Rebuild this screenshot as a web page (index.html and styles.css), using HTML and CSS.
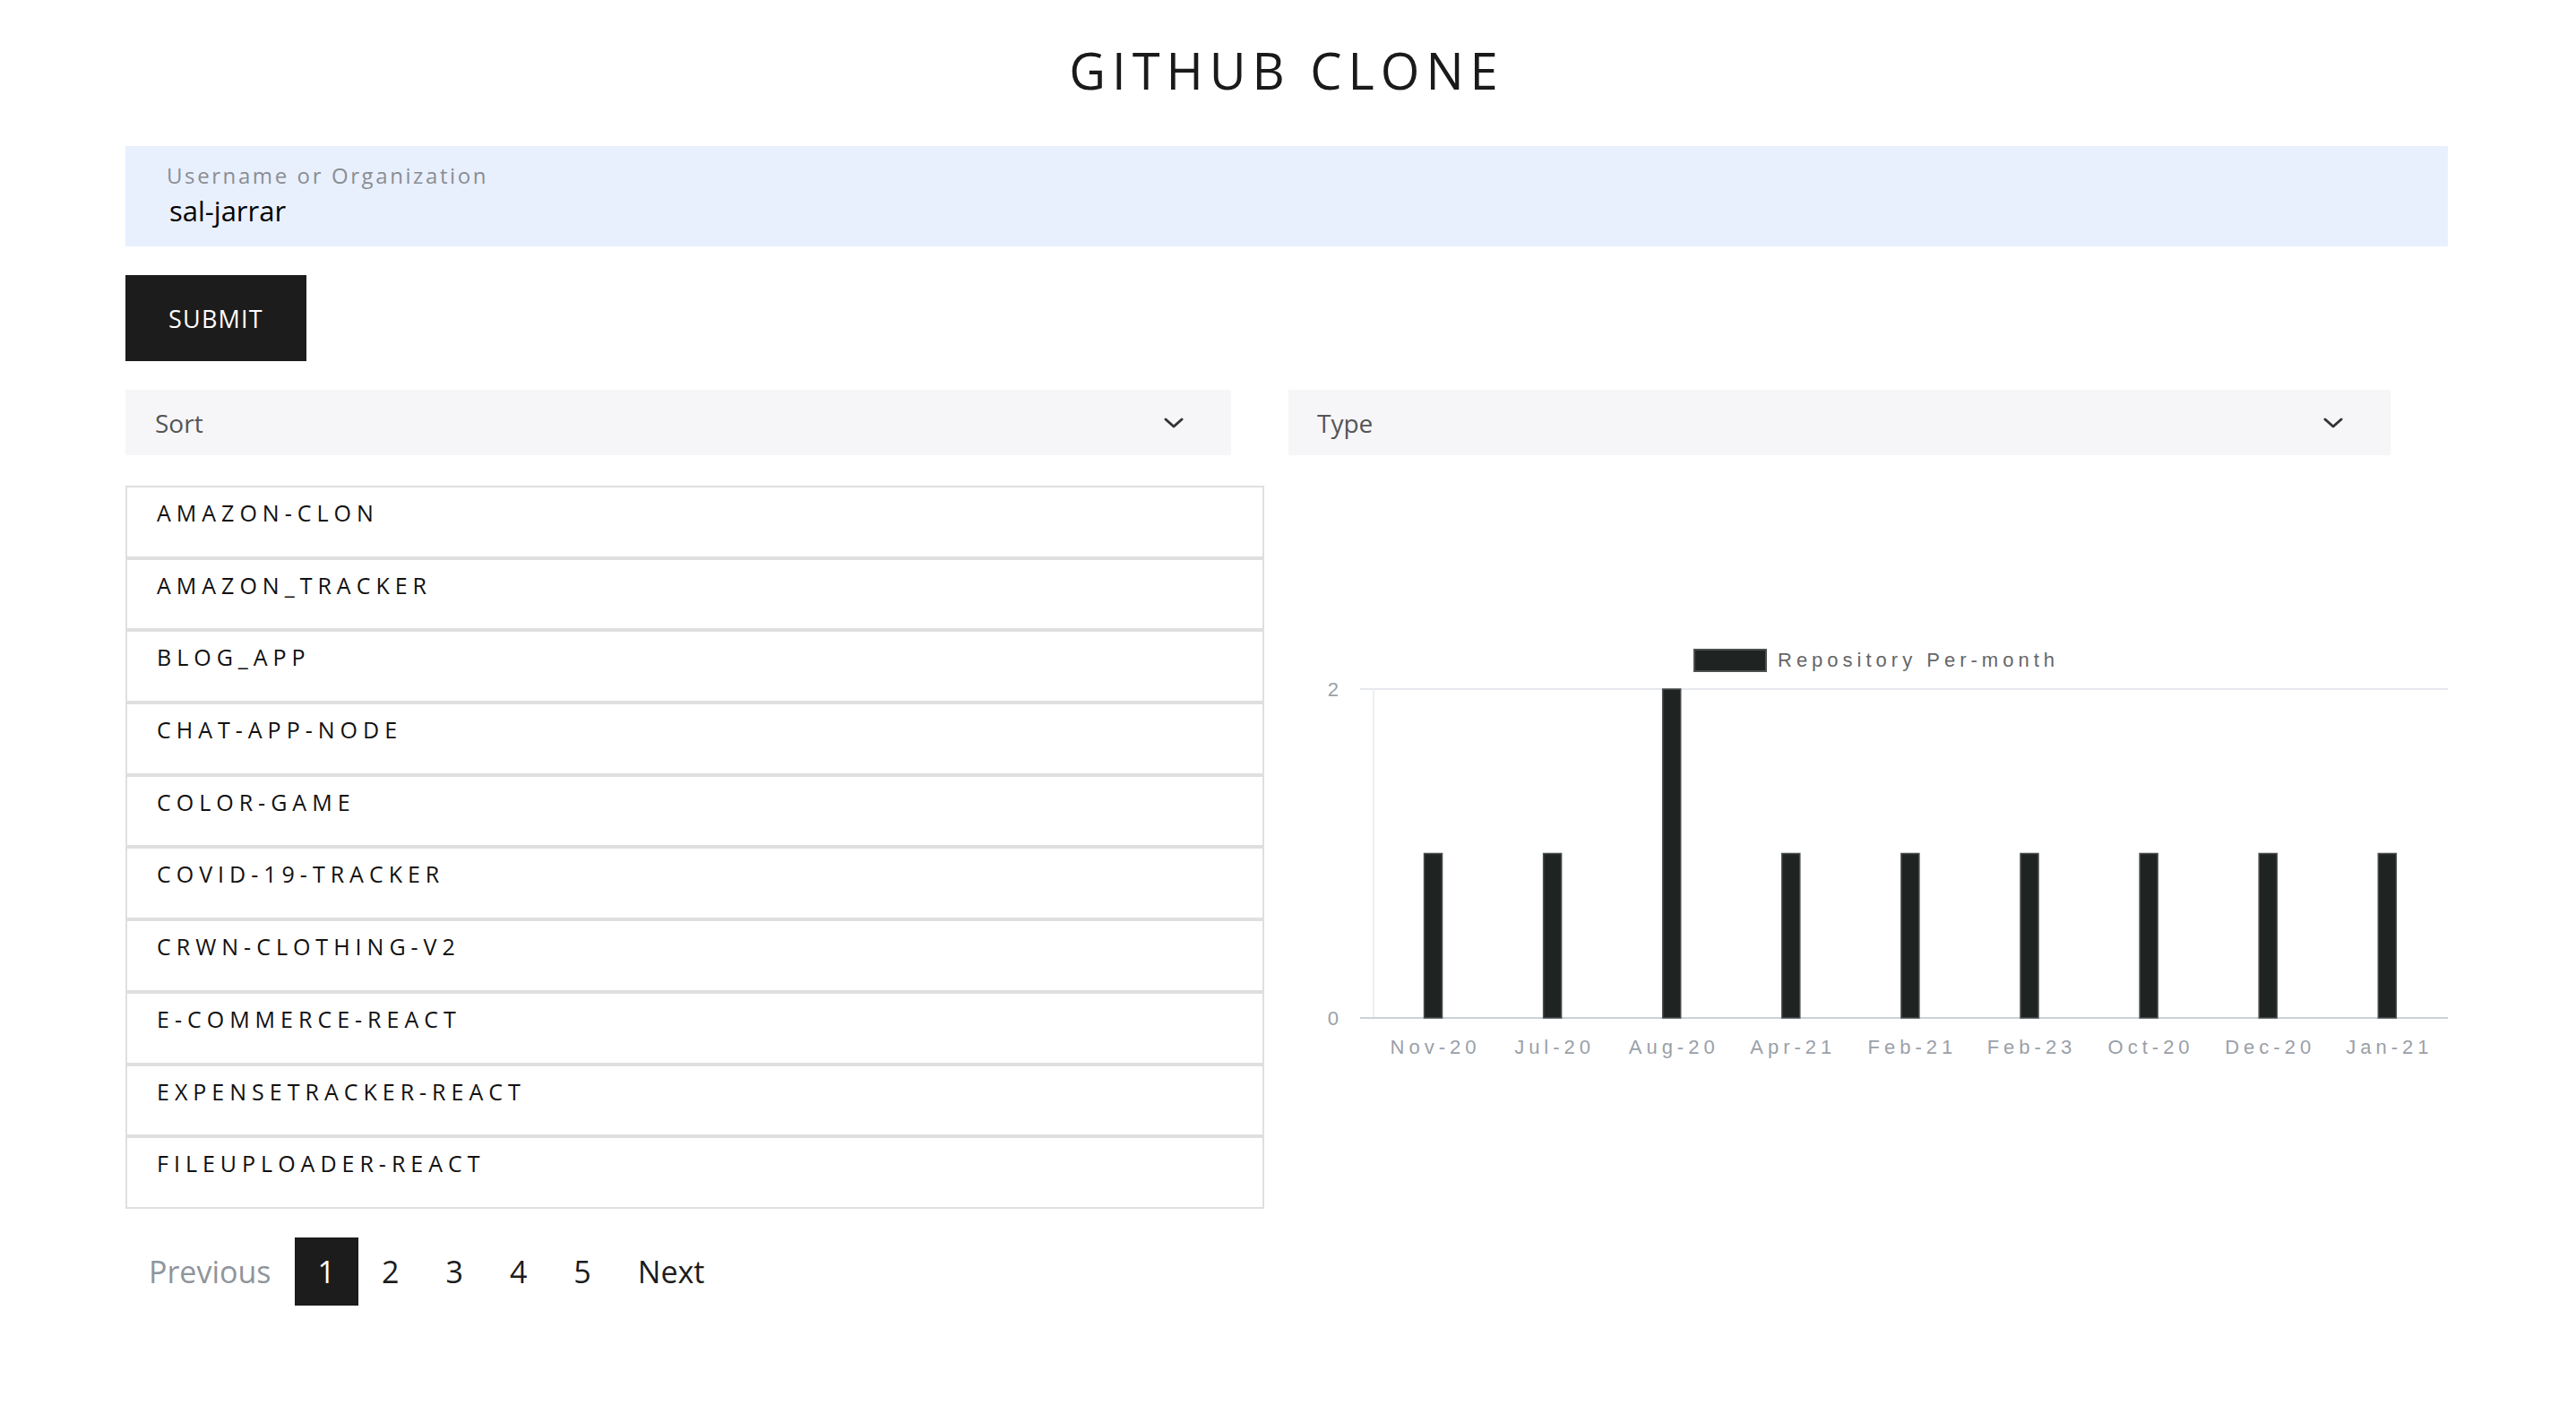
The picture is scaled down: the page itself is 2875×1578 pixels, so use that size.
FILE: index.html
```html
<!DOCTYPE html>
<html lang="en">
<head>
<meta charset="utf-8">
<title>GitHub Clone</title>
<link rel="stylesheet" href="styles.css">
</head>
<body>
<div class="page">
  <h1 class="title">GITHUB CLONE</h1>
  <form class="search">
    <div class="field">
      <label class="field-label">Username or Organization</label>
      <div class="field-value">sal-jarrar</div>
    </div>
    <button type="button" class="submit">SUBMIT</button>
  </form>
  <div class="content">
    <div class="col col-left">
      <div class="select select-sort">
        <span>Sort</span>
        <svg class="chev" width="22" height="12" viewBox="0 0 22 12"><polyline points="2,2 11,10 20,2" fill="none" stroke="#333" stroke-width="3" stroke-linecap="round" stroke-linejoin="round"/></svg>
      </div>
      <ul class="repos">
        <li>AMAZON-CLON</li>
        <li>AMAZON_TRACKER</li>
        <li>BLOG_APP</li>
        <li>CHAT-APP-NODE</li>
        <li>COLOR-GAME</li>
        <li>COVID-19-TRACKER</li>
        <li>CRWN-CLOTHING-V2</li>
        <li>E-COMMERCE-REACT</li>
        <li>EXPENSETRACKER-REACT</li>
        <li>FILEUPLOADER-REACT</li>
      </ul>
      <nav class="pager">
        <span class="pg pg-prev">Previous</span>
        <span class="pg pg-active">1</span>
        <span class="pg">2</span>
        <span class="pg">3</span>
        <span class="pg">4</span>
        <span class="pg">5</span>
        <span class="pg">Next</span>
      </nav>
    </div>
    <div class="col col-right">
      <div class="select select-type">
        <span>Type</span>
        <svg class="chev" width="22" height="12" viewBox="0 0 22 12"><polyline points="2,2 11,10 20,2" fill="none" stroke="#333" stroke-width="3" stroke-linecap="round" stroke-linejoin="round"/></svg>
      </div>
      <svg class="chart" width="1296" height="680" viewBox="0 0 1296 680">
        <rect x="455" y="183" width="80" height="24" fill="#1f2322" stroke="#4d4f4f" stroke-width="2"/>
        <text class="legend" x="548" y="202">Repository Per-month</text>
        <line x1="82" y1="227" x2="1296" y2="227" stroke="#e6e8ee" stroke-width="2"/>
        <line x1="97" y1="227" x2="97" y2="594" stroke="#eceef2" stroke-width="2"/>
        <line x1="82" y1="594" x2="1296" y2="594" stroke="#cdd1d8" stroke-width="2"/>
        <text class="ytick" x="58" y="235">2</text>
        <text class="ytick" x="58" y="602">0</text>
        <g class="bars">
          <rect x="153.5" y="410.5" width="20" height="183.5"/>
          <rect x="286.6" y="410.5" width="20" height="183.5"/>
          <rect x="419.7" y="227" width="20" height="367"/>
          <rect x="552.8" y="410.5" width="20" height="183.5"/>
          <rect x="685.9" y="410.5" width="20" height="183.5"/>
          <rect x="819" y="410.5" width="20" height="183.5"/>
          <rect x="952.1" y="410.5" width="20" height="183.5"/>
          <rect x="1085.2" y="410.5" width="20" height="183.5"/>
          <rect x="1218.3" y="410.5" width="20" height="183.5"/>
        </g>
        <g class="xticks">
          <text x="166" y="634">Nov-20</text>
          <text x="299.1" y="634">Jul-20</text>
          <text x="432.2" y="634">Aug-20</text>
          <text x="565.3" y="634">Apr-21</text>
          <text x="698.4" y="634">Feb-21</text>
          <text x="831.5" y="634">Feb-23</text>
          <text x="964.6" y="634">Oct-20</text>
          <text x="1097.7" y="634">Dec-20</text>
          <text x="1230.8" y="634">Jan-21</text>
        </g>
      </svg>
    </div>
  </div>
</div>
</body>
</html>
```

FILE: styles.css
```css
* { box-sizing: border-box; }

body {
  margin: 0;
  background: #fff;
  color: #1c1c1c;
  font-family: "Open Sans", "Noto Sans", sans-serif;
}

.page {
  width: 2592px;
  margin-left: 140px;
}

.title {
  margin: 0 0 47px;
  padding-top: 40px;
  font-size: 56px;
  line-height: 76px;
  font-weight: 400;
  letter-spacing: 7px;
  text-align: center;
  color: #1a1a1a;
}

.field {
  height: 112px;
  background: #e8f0fe;
  padding: 17px 0 0 46px;
}

.field-label {
  display: block;
  font-size: 24px;
  line-height: 32px;
  letter-spacing: 2.6px;
  color: #8a8d92;
}

.field-value {
  margin: 3px 0 0 3px;
  font-size: 31px;
  line-height: 40px;
  color: #000;
}

.submit {
  display: block;
  margin-top: 32px;
  width: 202px;
  height: 96px;
  border: 0;
  background: #1c1c1c;
  color: #fff;
  font-family: inherit;
  font-size: 27px;
  letter-spacing: 1.2px;
  padding: 0;
}

.content {
  margin-top: 32px;
  display: grid;
  grid-template-columns: 1296px 1296px;
}

.select {
  height: 73px;
  background: #f6f6f8;
  display: flex;
  align-items: center;
  justify-content: space-between;
  padding: 0 53px 0 33px;
  font-size: 28px;
  color: #555;
}

.chev { display: block; }

.select-sort { width: 1234px; }

.select-type {
  width: 1230px;
  margin-left: 2px;
  padding-left: 32px;
}

.repos {
  list-style: none;
  margin: 34px 0 0;
  padding: 0;
  width: 1271px;
}

.repos li {
  height: 80.7px;
  border: 2px solid #dfdfdf;
  padding: 11px 0 0 33px;
  font-size: 25px;
  line-height: 34px;
  letter-spacing: 6px;
  font-weight: 500;
  color: #111;
}

.pager {
  display: flex;
  margin-top: 32px;
  height: 76px;
}

.pg {
  padding: 0 26px;
  font-size: 34px;
  line-height: 76px;
  color: #1c1c1c;
}

.pg-prev {
  color: #8f959b;
}

.pg-active {
  background: #1c1c1c;
  color: #fff;
}

.chart {
  display: block;
  margin-top: 34px;
}

.chart text {
  font-family: "Liberation Sans", Arial, sans-serif;
  font-size: 22px;
}

.chart .legend {
  fill: #666;
  letter-spacing: 5px;
}

.chart .ytick {
  fill: #9aa0a8;
  text-anchor: end;
}

.bars rect {
  fill: #1f2322;
  stroke: #4a4d4d;
  stroke-width: 1.5;
}

.xticks text {
  fill: #9aa0a8;
  text-anchor: middle;
  letter-spacing: 5px;
}
```
